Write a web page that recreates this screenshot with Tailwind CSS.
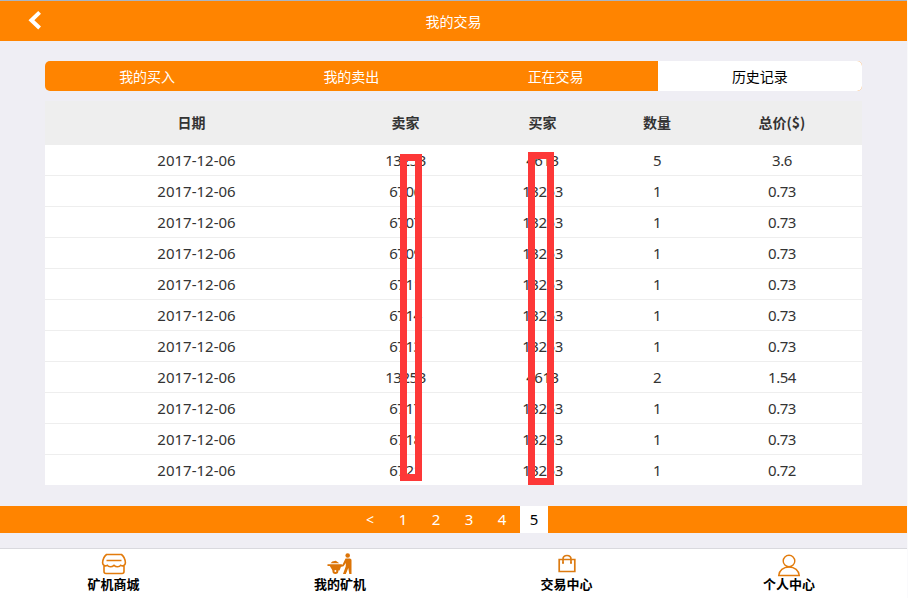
<!DOCTYPE html>
<html lang="zh-CN">
<head>
<meta charset="utf-8">
<title>我的交易</title>
<script src="https://cdn.jsdelivr.net/npm/@tailwindcss/browser@4"></script>
</head>
<body class="bg-[#fafafc]">
<div class="relative flex h-[598px] w-[907px] flex-col overflow-hidden bg-[#efeef4] font-['Noto_Sans','Noto_Sans_CJK_SC',sans-serif] text-sm text-[#333]">
  <header class="grid h-[41px] shrink-0 grid-cols-[1fr_auto_1fr] items-center border-t border-[#a9b5c2] bg-[#ff8400] text-white">
    <svg class="-mt-[2px] ml-[28px] h-[20px] w-[14px]" viewBox="0 0 14 20" fill="none" stroke="currentColor" stroke-width="4"><path d="M11.6 2.4 3.4 10.3l8.2 7.7"/></svg>
    <h1 class="leading-5 font-['Noto_Sans_CJK_SC',sans-serif]">我的交易</h1>
  </header>
  <nav class="mx-[45px] mt-5 grid h-[30px] shrink-0 grid-cols-4 overflow-hidden rounded-[5px] bg-[#ff8400] text-center leading-[30px] text-white font-['Noto_Sans_CJK_SC',sans-serif]">
    <a>我的买入</a><a>我的卖出</a><a>正在交易</a><a class="bg-white text-black">历史记录</a>
  </nav>
  <table class="mx-[45px] mt-2.5 h-[384px] w-[817px] shrink-0 table-fixed border-separate border-spacing-0 bg-white text-center">
    <colgroup><col class="w-[293px]"><col class="w-[135px]"><col class="w-[139px]"><col class="w-[90px]"><col class="w-[160px]"></colgroup>
    <thead><tr class="h-[44px] bg-[#eee] leading-5 font-['Noto_Sans_CJK_SC',sans-serif] *:pb-[3px]"><th>日期</th><th>卖家</th><th>买家</th><th>数量</th><th>总价($)</th></tr></thead>
    <tbody id="rows" class="text-[15px]"></tbody>
  </table>
  <div class="mt-[21px] flex h-[27px] shrink-0 bg-[#ff8400] pl-[356px] text-center text-[15px] leading-[27px] text-white">
    <a class="mr-[5px] w-[28px] text-[14px]">&lt;</a><a class="mr-[5px] w-[28px]">1</a><a class="mr-[5px] w-[28px]">2</a><a class="mr-[5px] w-[28px]">3</a><a class="mr-[4px] w-[28px]">4</a><a class="w-[28px] bg-white text-black">5</a>
  </div>
  <footer class="mt-[15px] grid h-[50px] shrink-0 grid-cols-[227px_226px_227px_218px] border-t border-[#d9d9de] bg-white text-[13px] font-bold text-black font-['Noto_Sans_CJK_SC',sans-serif]">
    <a class="flex flex-col items-center pt-[4px]">
      <svg class="h-[22px] w-[26px]" viewBox="0 0 26 22" fill="none" stroke="#e27b0c" stroke-width="1.6"><path d="M5.500 1.500h15c2 1.500 3.700 5 3.900 8.400-.2 2.400-2.500 3.800-4.600 2.400-1.500 2-4.700 2-6.800 0-2.100 2-5.300 2-6.800 0-2.100 1.400-4.400 0-4.600-2.400C1.800 6.500 3.500 3 5.500 1.500ZM3 13v5.500c0 1.300.8 2 2 2h16c1.200 0 2-.7 2-2V13M5.500 7.500h15"/></svg>
      <span class="-mt-px leading-[19px]">矿机商城</span>
    </a>
    <a class="flex flex-col items-center pt-[4px]">
      <svg class="h-[22px] w-[26px]" viewBox="0 0 26 22" fill="#dc7407"><circle cx="20.700" cy="2.500" r="2.300"/><path d="M18.500 5.500h4.200c1 0 1.800.8 1.800 1.800V21h-2.200l-1-6-2.500 6H16l2.700-7.500.2-3.500-2.400 3.300-3 .8-.4-1.300 2.500-1.200ZM.5 11.200h14.500l-2.500 6.300H5.500l-2.700-4.400H.5ZM3.500 10.200l1.800-1.700 3.500-.7 3.500 2.400Z"/><circle cx="8.400" cy="18" r="3"/><circle cx="8.400" cy="18" r="1" fill="#fff"/></svg>
      <span class="-mt-px leading-[19px]">我的矿机</span>
    </a>
    <a class="flex flex-col items-center pt-[4px]">
      <svg class="h-[22px] w-[20px]" viewBox="0 0 20 22" fill="none" stroke="#dc7b12" stroke-width="1.700"><path d="M2.200 6.500h15.600V18.500H2.200zM6 10V6.200C6 4 7.500 2.500 10 2.500s4 1.500 4 3.700V10M5 10h2m6 0h2"/></svg>
      <span class="-mt-px leading-[19px]">交易中心</span>
    </a>
    <a class="flex flex-col items-center pt-[4px]">
      <svg class="h-[24px] w-[24px]" viewBox="0 0 24 24" fill="none" stroke="#e27b0c" stroke-width="1.400"><circle cx="12" cy="8" r="5.800"/><path d="M1.700 22.500c.5-5 4.500-8.500 10.300-8.500s9.800 3.500 10.300 8.500Z"/></svg>
      <span class="-mt-[3px] leading-[19px]">个人中心</span>
    </a>
  </footer>
  <div class="absolute left-[400px] top-[154px] h-[327px] w-[22px] border-7 border-[#fd3838]"></div>
  <div class="absolute left-[528px] top-[152px] h-[333px] w-[26px] border-7 border-[#fd3838]"></div>
</div>
<script>
const data = [
  ['13253','4613','5','3.6'],['6706','13253','1','0.73'],['6707','13253','1','0.73'],['6709','13253','1','0.73'],
  ['6711','13253','1','0.73'],['6714','13253','1','0.73'],['6713','13253','1','0.73'],['13253','4613','2','1.54'],
  ['6717','13253','1','0.73'],['6718','13253','1','0.73'],['6721','13253','1','0.72']];
document.getElementById('rows').innerHTML = data.map(r =>
  `<tr class="h-[31px] leading-5 *:border-b *:border-[#eee] last:h-[30px] last:*:border-0"><td class="pl-2.5"><span>2017-12-06</span></td>${r.map(v => `<td><span class="tracking-[-0.45px]">${v}</span></td>`).join('')}</tr>`).join('');
</script>
</body>
</html>
